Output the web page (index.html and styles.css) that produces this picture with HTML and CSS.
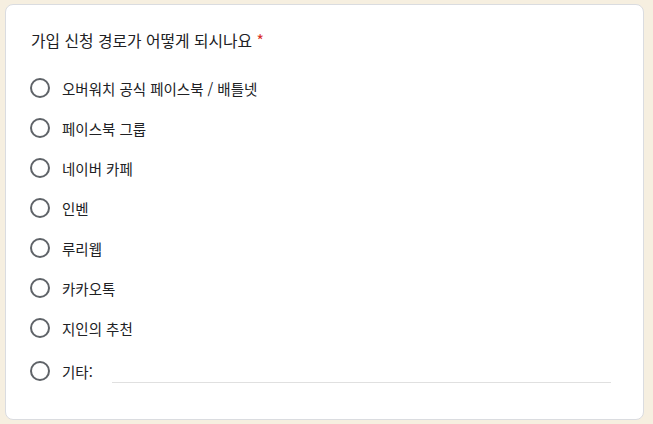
FILE: index.html
```html
<!DOCTYPE html>
<html lang="ko">
<head>
<meta charset="utf-8">
<link rel="stylesheet" href="styles.css">
</head>
<body>
<div class="card">
  <div class="title">가입 신청 경로가 어떻게 되시나요 <span class="req">*</span></div>
  <div class="options">
    <div class="opt"><span class="radio"></span><span class="label">오버워치 공식 페이스북 / 배틀넷</span></div>
    <div class="opt"><span class="radio"></span><span class="label">페이스북 그룹</span></div>
    <div class="opt"><span class="radio"></span><span class="label">네이버 카페</span></div>
    <div class="opt"><span class="radio"></span><span class="label">인벤</span></div>
    <div class="opt"><span class="radio"></span><span class="label">루리웹</span></div>
    <div class="opt"><span class="radio"></span><span class="label">카카오톡</span></div>
    <div class="opt"><span class="radio"></span><span class="label">지인의 추천</span></div>
    <div class="opt other"><span class="radio"></span><span class="label">기타:</span><span class="line"></span></div>
  </div>
</div>
</body>
</html>
```
FILE: styles.css
```css
html, body { margin: 0; padding: 0; }
body {
  background: #f6efe0;
  padding: 4px 9px 4px 5px;
  font-family: "Noto Sans CJK KR", "Noto Sans", sans-serif;
  color: #202124;
}
.card {
  background: #fff;
  border: 1px solid #dadce0;
  border-radius: 8px;
  height: 416px;
  box-sizing: border-box;
  padding: 24px 32px 0 24px;
}
.title {
  font-size: 15.8px;
  line-height: 24px;
  padding-left: 1px;
}
.req { color: #d93025; }
.options { margin-top: 15px; display: flex; flex-direction: column; }
.opt {
  display: flex;
  align-items: center;
  height: 40px;
  font-size: 14.5px;
}
.radio {
  width: 16px;
  height: 16px;
  border: 2px solid #5f6368;
  border-radius: 50%;
  flex: none;
}
.label { margin-left: 12px; }
.other { margin-top: 3px; }
.line {
  flex: 1;
  align-self: flex-end;
  margin: 0 0 8px 19px;
  border-bottom: 1px solid #e0e0e0;
  height: 0;
}
```
